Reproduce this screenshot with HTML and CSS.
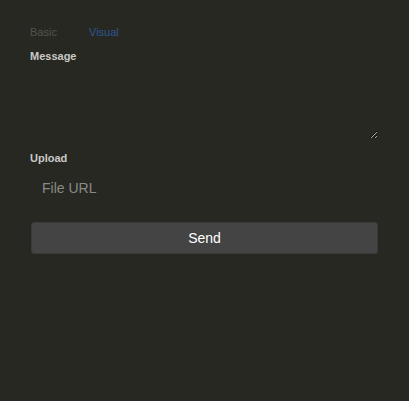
FILE: index.html
```html
<!DOCTYPE html>
<html>
<head>
<meta charset="utf-8">
<link rel="stylesheet" href="styles.css">
</head>
<body>
<div class="form">
  <div class="tabs">
    <span class="tab">Basic</span>
    <span class="tab active">Visual</span>
  </div>
  <label class="label">Message</label>
  <textarea class="message"></textarea>
  <label class="label label-upload">Upload</label>
  <input class="url" type="text" placeholder="File URL">
  <button class="send">Send</button>
</div>
</body>
</html>
```

FILE: styles.css
```css
html, body {
  margin: 0;
  padding: 0;
  background: #272822;
  height: 100%;
}
body {
  font-family: "Liberation Sans", Arial, sans-serif;
}
.form {
  display: flex;
  flex-direction: column;
  padding: 26px 31px 0 30px;
}
.tabs {
  display: flex;
  font-size: 11px;
  line-height: 13px;
}
.tab {
  width: 59px;
  color: #53544f;
}
.tab.active {
  color: #2c5793;
}
.label {
  display: block;
  margin-top: 11px;
  font-size: 11px;
  font-weight: bold;
  line-height: 13px;
  color: #c9c9c6;
}
.label-upload {
  margin-top: 13px;
}
.message {
  display: block;
  margin-top: 4px;
  height: 72px;
  background: transparent;
  border: none;
  outline: none;
  padding: 0;
  color: #ddd;
  font-family: inherit;
}
.url {
  display: block;
  margin-top: 8px;
  height: 30px;
  padding: 0 12px;
  background: transparent;
  border: none;
  outline: none;
  color: #ddd;
  font-size: 14px;
  font-family: inherit;
}
.url::placeholder {
  color: #8a8a86;
}
.send {
  display: block;
  margin-top: 19px;
  margin-left: 1px;
  height: 32px;
  background: #444444;
  border: 1px solid #3a3a3a;
  border-radius: 3px;
  color: #ffffff;
  font-size: 14px;
  font-family: inherit;
}
```
